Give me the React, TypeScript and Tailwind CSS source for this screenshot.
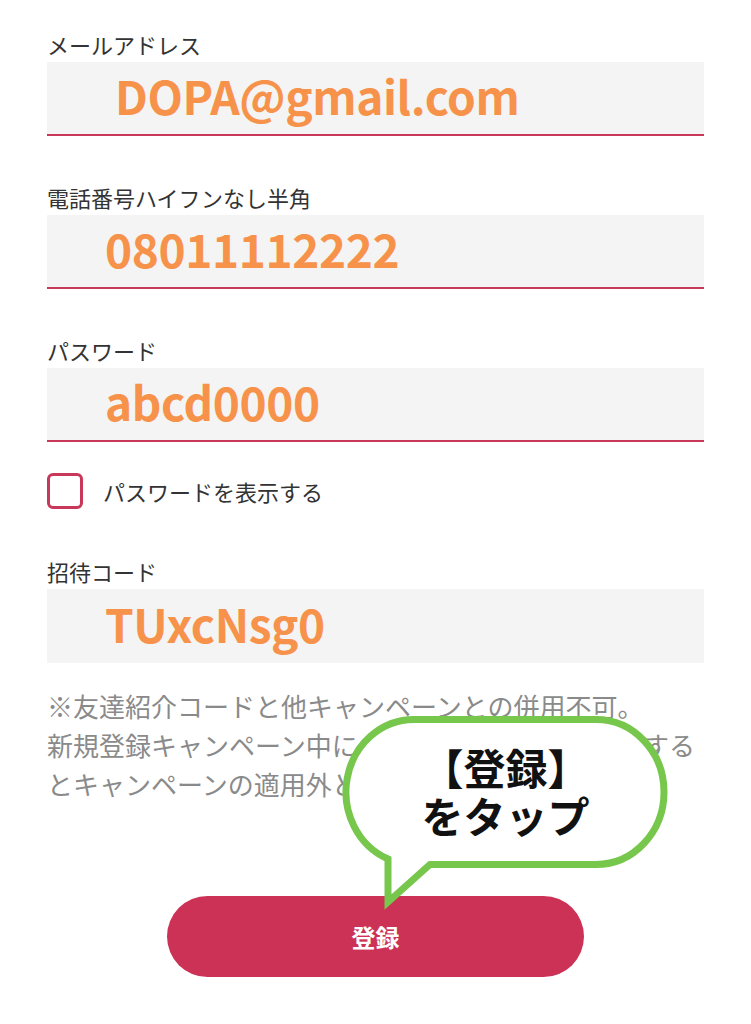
import React from "react";

const FONT = "font-['Noto_Sans_CJK_JP','Noto_Sans',sans-serif]";

type FieldProps = {
  label: string;
  value: string;
  underline?: boolean;
  indent?: string;
  className?: string;
};

function Field({ label, value, underline = true, indent = "pl-[58px]", className = "" }: FieldProps) {
  return (
    <div className={className}>
      <p className="text-[22px] leading-[30px] text-[#333333]">{label}</p>
      <div
        className={
          "mt-[3px] flex h-[74px] items-center bg-[#f4f4f4] pb-[6px] " +
          indent +
          (underline ? " border-b-2 border-[#c9375b]" : "")
        }
      >
        <span className="text-[46px] font-bold leading-none tracking-[-0.4px] text-[#f7924b]">{value}</span>
      </div>
    </div>
  );
}

// speech bubble pointing at the register button
function Bubble() {
  return (
    <div className="absolute left-[330px] top-[705px] h-[210px] w-[350px]">
      <svg width="350" height="210" viewBox="0 0 350 210" className="absolute inset-0">
        <path
          d="M84 14.5 H266 A68 72.5 0 0 1 266 159.5 H100 L58 197 L58 154 A68 72.5 0 0 1 84 14.5 Z"
          fill="#ffffff"
          stroke="#78c74d"
          strokeWidth="7"
          strokeLinejoin="miter"
        />
      </svg>
      <div className="absolute left-[13px] top-[11px] flex h-[150px] w-[325px] flex-col items-center justify-center text-[42px] font-bold leading-[48px] text-[#111111]">
        <span>【登録】</span>
        <span>をタップ</span>
      </div>
    </div>
  );
}

export default function App() {
  return (
    <div className={"relative h-[1024px] w-[751px] overflow-hidden bg-white px-[47px] pt-[29px] " + FONT}>
      <Field label="メールアドレス" value="DOPA@gmail.com" indent="pl-[68px]" />
      <Field className="mt-[46px]" label="電話番号ハイフンなし半角" value="08011112222" />
      <Field className="mt-[46px]" label="パスワード" value="abcd0000" />

      {/* show password */}
      <label className="mt-[31px] flex items-center gap-[20px]">
        <span className="h-[36px] w-[36px] rounded-[6px] border-[3px] border-[#c9375b] bg-white" />
        <span className="text-[22px] leading-[30px] text-[#333333]">パスワードを表示する</span>
      </label>

      <Field className="mt-[47px]" label="招待コード" value="TUxcNsg0" underline={false} />

      <p className="mt-[23px] whitespace-nowrap text-[26px] leading-[39px] text-[#8a8a8a]">
        ※友達紹介コードと他キャンペーンとの併用不可。
        <br />
        新規登録キャンペーン中に、こちらのコードを入力する
        <br />
        とキャンペーンの適用外となる場合があります。
      </p>

      <button className="mx-auto mt-[93px] flex h-[81px] w-[417px] items-center justify-center rounded-full bg-[#cc3256] text-[24px] font-bold text-white">
        登録
      </button>

      <Bubble />
    </div>
  );
}
